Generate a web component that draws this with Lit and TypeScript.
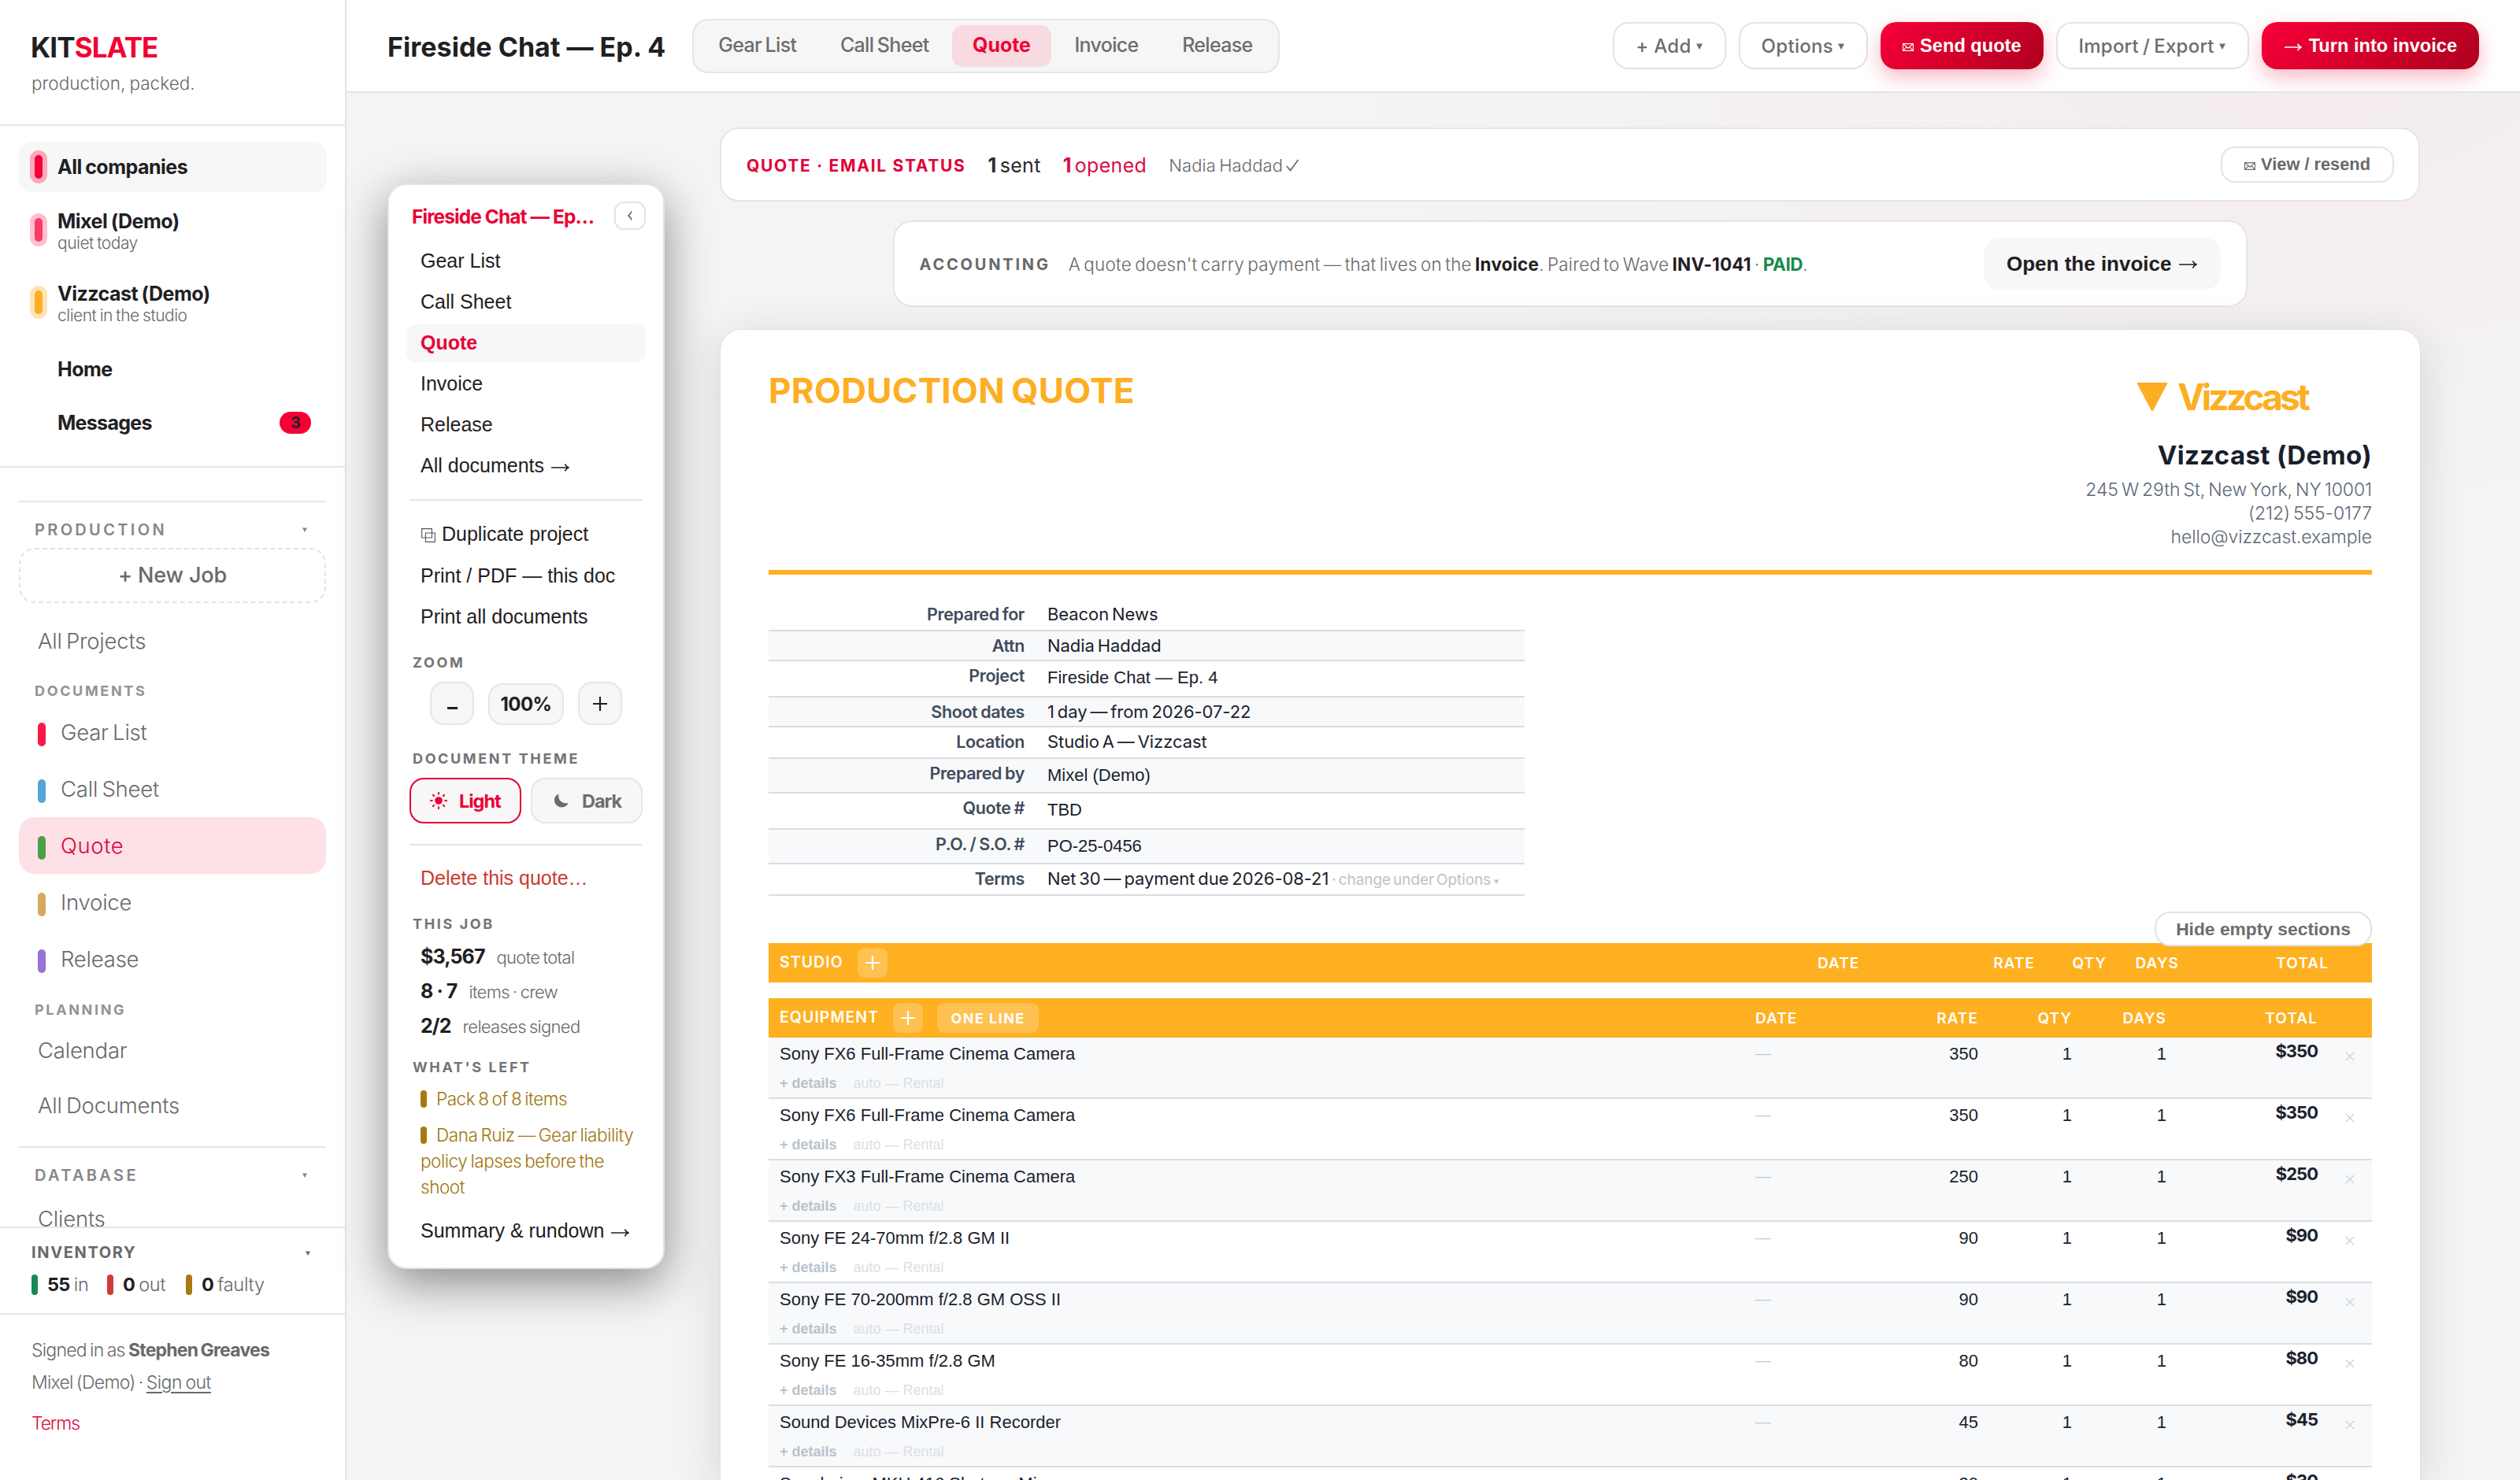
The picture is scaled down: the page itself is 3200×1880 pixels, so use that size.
import { LitElement, html, css, svg } from "lit";
import { customElement } from "lit/decorators.js";
import { classMap } from "lit/directives/class-map.js";

const items = [
  { name: "Sony FX6 Full-Frame Cinema Camera", rate: 350 },
  { name: "Sony FX6 Full-Frame Cinema Camera", rate: 350 },
  { name: "Sony FX3 Full-Frame Cinema Camera", rate: 250 },
  { name: "Sony FE 24-70mm f/2.8 GM II", rate: 90 },
  { name: "Sony FE 70-200mm f/2.8 GM OSS II", rate: 90 },
  { name: "Sony FE 16-35mm f/2.8 GM", rate: 80 },
  { name: "Sound Devices MixPre-6 II Recorder", rate: 45 },
  { name: "Sennheiser MKH 416 Shotgun Mic", rate: 30 },
];

const documents = [
  { label: "Gear List", color: "#fb1846" },
  { label: "Call Sheet", color: "#52a5d8" },
  { label: "Quote", color: "#4aa147" },
  { label: "Invoice", color: "#d6aa5c" },
  { label: "Release", color: "#9673d6" },
];

const info = [
  { label: "Prepared for", value: "Beacon News", height: 40 },
  { label: "Attn", value: "Nadia Haddad", height: 38 },
  { label: "Project", value: "Fireside Chat — Ep. 4", height: 46, input: true },
  { label: "Shoot dates", value: "1 day — from 2026-07-22", height: 38 },
  { label: "Location", value: "Studio A — Vizzcast", height: 40 },
  { label: "Prepared by", value: "Mixel (Demo)", height: 44, input: true },
  { label: "Quote #", value: "TBD", height: 46, input: true },
  { label: "P.O. / S.O. #", value: "PO-25-0456", height: 44, input: true },
  { label: "Terms", value: "Net 30 — payment due 2026-08-21", height: 40, note: "change under Options" },
];

// small glyph icons, all drawn in currentColor
const arrow = html`<svg class="arrow" width="25" height="12" viewBox="0 0 25 12">
  ${svg`<path d="M1 6H23M18.5 1.5C19.5 4 21 5.4 23.5 6C21 6.6 19.5 8 18.5 10.5" fill="none" stroke="currentColor" stroke-width="1.7"/>`}
</svg>`;

const mail = html`<svg class="mail" width="14" height="10" viewBox="0 0 14 10">
  ${svg`<path d="M.6 .6H13.4V9.4H.6ZM.6 .6L7 6.2L13.4 .6M.6 9.4L5.2 4.6M13.4 9.4L8.8 4.6" fill="none" stroke="currentColor" stroke-width="1.1"/>`}
</svg>`;

const caret = html`<svg class="caret" width="8" height="8" viewBox="0 0 8 8">
  ${svg`<path d="M0 .5H8L4 8Z" fill="currentColor"/>`}
</svg>`;

const plus = html`<svg width="18" height="18" viewBox="0 0 18 18">
  ${svg`<path d="M9 0V18M0 9H18" stroke="currentColor" stroke-width="2.2"/>`}
</svg>`;

const sun = html`<svg width="24" height="24" viewBox="0 0 24 24">
  ${svg`<circle cx="12" cy="12" r="4.8" fill="currentColor"/>
  <path d="M12 1V4.6M12 19.4V23M1 12H4.6M19.4 12H23M4.3 4.3L6.7 6.7M17.3 17.3L19.7 19.7M4.3 19.7L6.7 17.3M17.3 6.7L19.7 4.3" stroke="currentColor" stroke-width="2"/>`}
</svg>`;

const moon = html`<svg width="20" height="18" viewBox="0 0 20 18">
  ${svg`<path d="M6.5 .5C2.6 2 1 5 1 8.3C1 13.5 5 17.4 10.2 17.4C14.2 17.4 17.4 15.3 18.6 12C11.5 13.8 4.8 8.6 6.5 .5Z" fill="currentColor"/>`}
</svg>`;

const duplicate = html`<svg class="dup" width="18" height="18" viewBox="0 0 18 18">
  ${svg`<path d="M.6 .6H13.4V12H.6ZM5.4 6H17.4V17.4H5.4Z" fill="none" stroke="currentColor" stroke-width="1.1"/>`}
</svg>`;

@customElement("side-nav")
export class SideNav extends LitElement {
  static styles = css`
    :host {
      display: flex;
      flex-direction: column;
      flex: none;
      box-sizing: border-box;
      width: 440px;
      height: 1880px;
      background: #fff;
      border-right: 2px solid #e4e4e4;
      color: #68696b;
    }
    .brand {
      box-sizing: border-box;
      height: 160px;
      padding: 40px 0 0 39px;
      border-bottom: 2px solid #e6e6e6;
    }
    .logo { font-size: 35px; font-weight: 700; line-height: 40px; letter-spacing: -0.026em; color: #1f2022; }
    .logo span { color: #f20034; }
    .tag { margin-top: 10px; padding-left: 1px; font-size: 22.5px; font-weight: 350; line-height: 32px; letter-spacing: 0.002em; word-spacing: -0.06em; }
    .companies {
      box-sizing: border-box;
      height: 434px;
      padding: 20px 23px 0 24px;
      border-bottom: 2px solid #e6e6e6;
    }
    .company {
      display: flex;
      align-items: center;
      box-sizing: border-box;
      height: 88px;
      margin-bottom: 4px;
      padding: 0 20px 0 14px;
      border-radius: 16px;
      color: #1f2022;
      font-size: 25px;
      font-weight: 650;
      letter-spacing: -0.02em;
      word-spacing: -0.04em;
    }
    .company.short { height: 64px; }
    .company.on { background: #f7f7f7; }
    .company.home { margin-top: 9px; }
    .company.indent { padding-left: 49px; }
    .pill {
      box-sizing: border-box;
      width: 22px;
      height: 42px;
      margin-right: 13px;
      border: 6px solid;
      border-radius: 11px;
    }
    .pill.all { background: #f60036; border-color: #f9a9bb; }
    .pill.mixel { background: #fb3a66; border-color: #fdc0ce; }
    .pill.vizz { background: #fdae22; border-color: #fee4b8; }
    .names { padding-top: 5px; line-height: 27px; }
    .status { font-size: 21px; font-weight: 350; letter-spacing: -0.024em; color: #68696b; }
    .badge {
      width: 40px;
      margin-left: auto;
      border-radius: 14px;
      background: #f40035;
      font-size: 20px;
      line-height: 28px;
      text-align: center;
    }
    .messages { letter-spacing: -0.028em; }
    nav { flex: 1; min-height: 0; overflow: hidden; padding: 42px 24px 0; }
    .group { border-top: 2px solid #e6e6e6; }
    .group + .group { margin-top: 17px; }
    .head {
      display: flex;
      justify-content: space-between;
      align-items: center;
      box-sizing: border-box;
      height: 55px;
      padding: 16px 24px 1px 20px;
      font-size: 20px;
      font-weight: 600;
      letter-spacing: 0.167em;
      color: #858688;
    }
    .caret { width: 6px; height: 6px; }
    .new {
      box-sizing: border-box;
      height: 70px;
      margin: 3px 0 13px;
      border: 2px dashed #e2e2e2;
      border-radius: 20px;
      font-size: 27px;
      font-weight: 550;
      line-height: 65px;
      letter-spacing: -0.004em;
      text-align: center;
    }
    .label {
      box-sizing: border-box;
      height: 45px;
      padding: 11px 0 0 20px;
      font-size: 18px;
      font-weight: 650;
      line-height: 35px;
      letter-spacing: 0.147em;
      color: #929395;
    }
    .link {
      display: flex;
      align-items: center;
      height: 70px;
      padding-left: 24px;
      border-radius: 20px;
      font-size: 27.5px;
      font-weight: 350;
      letter-spacing: -0.008em;
      word-spacing: -0.08em;
    }
    .link.doc { height: 72px; padding-left: 24px; }
    .link.on { background: #fde1e6; color: #e00038; letter-spacing: 0.022em; }
    .dot { width: 10px; height: 30px; margin: 6px 19px 0 0; border-radius: 5px; }
    .inventory { box-sizing: border-box; height: 110px; padding: 16px 43px 0 40px; border-top: 2px solid #e6e6e6; }
    .inv-head {
      display: flex;
      justify-content: space-between;
      align-items: center;
      font-size: 20px;
      font-weight: 700;
      line-height: 31px;
      letter-spacing: 0.082em;
    }
    .inv-head .caret { margin-right: 1px; }
    .stats { display: grid; grid-template-columns: 96px 100px auto; margin-top: 8px; }
    .stat { display: flex; align-items: center; font-size: 23.5px; font-weight: 350; line-height: 34px; letter-spacing: -0.01em; }
    .stat b { margin-right: 5px; color: #1f2022; letter-spacing: -0.03em; }
    .bar { width: 8px; height: 26px; margin-right: 12px; border-radius: 4px; }
    .in { background: #178a52; }
    .out { background: #d03a35; }
    .faulty { background: #a9780f; }
    .account {
      box-sizing: border-box;
      height: 212px;
      padding: 25px 0 0 40px;
      border-top: 2px solid #e6e6e6;
      font-size: 23px;
      font-weight: 350;
      line-height: 41px;
      letter-spacing: -0.034em;
      word-spacing: -0.06em;
    }
    .out-link { text-decoration: underline; text-underline-offset: 4px; letter-spacing: -0.024em; }
    .terms { margin-top: 11px; letter-spacing: -0.05em; color: #dc0b40; }
  `;

  render() {
    return html`
      <div class="brand">
        <div class="logo">KIT<span>SLATE</span></div>
        <div class="tag">production, packed.</div>
      </div>
      <div class="companies">
        <div class="company short on"><span class="pill all"></span>All companies</div>
        <div class="company">
          <span class="pill mixel"></span>
          <div class="names">Mixel (Demo)<div class="status">quiet today</div></div>
        </div>
        <div class="company">
          <span class="pill vizz"></span>
          <div class="names">Vizzcast (Demo)<div class="status">client in the studio</div></div>
        </div>
        <div class="company short home indent">Home</div>
        <div class="company short indent messages">Messages<span class="badge">3</span></div>
      </div>
      <nav>
        <div class="group">
          <div class="head">PRODUCTION${caret}</div>
          <div class="new">+ New Job</div>
          <div class="link">All Projects</div>
          <div class="label">DOCUMENTS</div>
          ${documents.map(d => html`
            <div class=${classMap({ link: true, doc: true, on: d.label === "Quote" })}>
              <span class="dot" style="background:${d.color}"></span>${d.label}
            </div>`)}
          <div class="label">PLANNING</div>
          <div class="link">Calendar</div>
          <div class="link">All Documents</div>
        </div>
        <div class="group">
          <div class="head">DATABASE${caret}</div>
          <div class="link">Clients</div>
        </div>
      </nav>
      <div class="inventory">
        <div class="inv-head">INVENTORY${caret}</div>
        <div class="stats">
          <div class="stat"><span class="bar in"></span><b>55</b>in</div>
          <div class="stat"><span class="bar out"></span><b>0</b>out</div>
          <div class="stat"><span class="bar faulty"></span><b>0</b>faulty</div>
        </div>
      </div>
      <div class="account">
        <div>Signed in as <b>Stephen Greaves</b></div>
        <div>Mixel (Demo) · <span class="out-link">Sign out</span></div>
        <div class="terms">Terms</div>
      </div>
    `;
  }
}

@customElement("top-bar")
export class TopBar extends LitElement {
  static styles = css`
    :host {
      display: flex;
      align-items: center;
      flex: none;
      box-sizing: border-box;
      height: 118px;
      padding: 0 52px 0 52px;
      background: #fff;
      border-bottom: 2px solid #e4e4e4;
      color: #6c6d6f;
      overflow: hidden;
    }
    h1 { flex: none; width: 387px; margin: 3px 0 0; font-size: 34px; font-weight: 700; line-height: 44px; letter-spacing: 0.001em; color: #1f2022; }
    .tabs {
      display: flex;
      gap: 3px;
      box-sizing: border-box;
      height: 69px;
      margin: 1px auto 0 0;
      padding: 6px 6px 6px 5px;
      border: 2px solid #e6e6e6;
      border-radius: 20px;
      background: #f6f6f6;
    }
    .tab {
      padding: 0 26.3px;
      border-radius: 14px;
      font-size: 25px;
      font-weight: 550;
      line-height: 51px;
      letter-spacing: -0.027em;
      word-spacing: -0.06em;
    }
    .tab.on { background: #f8dbe1; color: #ee0035; font-weight: 700; letter-spacing: -0.003em; }
    .btn {
      display: flex;
      align-items: center;
      box-sizing: border-box;
      height: 60px;
      margin-left: 16px;
      padding: 0 28px 0 27px;
      border: 2px solid #e4e4e4;
      border-radius: 20px;
      font-size: 24px;
      font-weight: 450;
      letter-spacing: 0.013em;
      white-space: nowrap;
    }
    .btn svg:first-of-type:not(.caret):not(.arrow):not(.mail) { width: 17px; margin: 2px 7px 0 0; }
    .btn .caret { margin: 2px 0 0 6px; }
    .btn.tight { letter-spacing: 0.009em; word-spacing: -0.06em; }
    .primary {
      padding: 0 28px;
      border: 0;
      background: linear-gradient(135deg, #f90037, #ae001f);
      box-shadow: 0 10px 26px rgba(240, 0, 50, 0.28);
      color: #fff;
      font: 700 23.6px "Liberation Sans", Arial, sans-serif;
      letter-spacing: 0;
    }
    .mail { margin: 4px 8px 0 0; }
    .primary .arrow { margin: 4px 8px 0 0; width: 24px; }
  `;

  render() {
    const tabs = documents.map(d => d.label);
    return html`
      <h1>Fireside Chat — Ep. 4</h1>
      <div class="tabs">
        ${tabs.map(t => html`<div class=${classMap({ tab: true, on: t === "Quote" })}>${t}</div>`)}
      </div>
      <div class="btn">+ Add${caret}</div>
      <div class="btn">Options${caret}</div>
      <div class="btn primary">${mail}Send quote</div>
      <div class="btn tight">Import / Export${caret}</div>
      <div class="btn primary">${arrow}Turn into invoice</div>
    `;
  }
}

@customElement("job-panel")
export class JobPanel extends LitElement {
  static styles = css`
    :host {
      flex: none;
      box-sizing: border-box;
      width: 352px;
      height: 1379px;
      padding: 21px 22px 0;
      border: 2px solid #e5e5e5;
      border-radius: 24px;
      background: #fff;
      box-shadow: 0 18px 60px rgba(0, 0, 0, 0.44);
      color: #1f2022;
    }
    .top { display: flex; justify-content: space-between; align-items: center; height: 36px; margin-bottom: 16px; padding-left: 7px; }
    .title { margin-top: 2px; font-size: 24.5px; font-weight: 700; letter-spacing: -0.038em; color: #ea0034; white-space: nowrap; }
    .collapse {
      display: flex;
      align-items: center;
      justify-content: center;
      box-sizing: border-box;
      width: 40px;
      height: 36px;
      border: 2px solid #e4e4e4;
      border-radius: 12px;
      color: #6c6d6f;
    }
    .item {
      height: 48px;
      margin-bottom: 4px;
      padding-left: 18px;
      border-radius: 12px;
      font: 25px "Liberation Sans", Arial, sans-serif;
      line-height: 46px;
      white-space: nowrap;
    }
    .item.on { background: #f7f7f7; color: #e80037; font-weight: 700; }
    .item .arrow { margin-left: 1px; }
    .item.copy { height: 50px; line-height: 48px; }
    .dup { margin: 0 8px -2px 1px; color: #55575a; }
    .rule { height: 2px; margin: 18px 4px; background: #e4e4e4; }
    .danger { color: #c93a32; }
    .label {
      padding-left: 8px;
      font-size: 18px;
      font-weight: 650;
      line-height: 20px;
      letter-spacing: 0.146em;
      color: #737476;
    }
    .zoom { display: flex; justify-content: center; align-items: flex-end; gap: 18px; height: 55px; margin: 14px 0 33px; }
    .zoom div {
      display: flex;
      align-items: center;
      justify-content: center;
      box-sizing: border-box;
      width: 56px;
      height: 55px;
      border: 2px solid #e6e6e6;
      border-radius: 18px;
      background: #f7f7f7;
      font-size: 24px;
      font-weight: 700;
      letter-spacing: -0.024em;
    }
    .zoom .level { width: 96px; height: 53px; }
    .minus { width: 13px; height: 3.5px; margin-top: 12px; background: #1f2022; }
    .themes { display: flex; gap: 12px; margin: 14px 4px 26px; }
    .theme {
      display: flex;
      align-items: center;
      box-sizing: border-box;
      width: 142px;
      height: 58px;
      padding-left: 23px;
      border: 2px solid #e6e6e6;
      border-radius: 18px;
      background: #f7f7f7;
      font-size: 23.5px;
      font-weight: 700;
      letter-spacing: -0.044em;
      color: #6c6d6f;
    }
    .theme svg { margin-right: 14px; }
    .theme.dark { padding-left: 27px; }
    .theme.dark svg { margin-right: 16px; }
    .theme.on { border-color: #e60037; color: #ea0036; }
    .stats { margin: 10px 0 20px 18px; }
    .stat { display: flex; align-items: baseline; height: 44px; font-size: 22px; font-weight: 350; line-height: 43px; letter-spacing: -0.032em; word-spacing: -0.06em; color: #68696b; }
    .stat b { margin-right: 15px; font-size: 25px; font-weight: 750; color: #1f2022; letter-spacing: -0.036em; word-spacing: 0; }
    .todo { margin: 13px 4px 0 18px; font-size: 22.5px; font-weight: 350; line-height: 33px; letter-spacing: -0.02em; word-spacing: -0.08em; color: #a0740c; }
    .todo + .todo { margin-top: 13px; }
    .todo i { display: inline-block; width: 8px; height: 22px; margin-right: 12px; border-radius: 4px; background: #a9780f; vertical-align: -3px; }
    .gap-a { margin-top: 24px; }
    .gap-b { margin-top: 16px; }
  `;

  render() {
    return html`
      <div class="top">
        <div class="title">Fireside Chat — Ep…</div>
        <div class="collapse">
          <svg width="6" height="12" viewBox="0 0 6 12"><path d="M5 .5C4 3 2.8 4.8 1 6C2.8 7.2 4 9 5 11.5" fill="none" stroke="currentColor" stroke-width="1.7"/></svg>
        </div>
      </div>
      ${documents.map(d => html`<div class=${classMap({ item: true, on: d.label === "Quote" })}>${d.label}</div>`)}
      <div class="item">All documents ${arrow}</div>
      <div class="rule"></div>
      <div class="item copy">${duplicate}Duplicate project</div>
      <div class="item">Print / PDF — this doc</div>
      <div class="item">Print all documents</div>
      <div class="label gap-a">ZOOM</div>
      <div class="zoom">
        <div><span class="minus"></span></div>
        <div class="level">100%</div>
        <div>${plus}</div>
      </div>
      <div class="label">DOCUMENT THEME</div>
      <div class="themes">
        <div class="theme on">${sun}Light</div>
        <div class="theme dark">${moon}Dark</div>
      </div>
      <div class="rule"></div>
      <div class="item danger">Delete this quote…</div>
      <div class="label gap-a">THIS JOB</div>
      <div class="stats">
        <div class="stat"><b>$3,567</b>quote total</div>
        <div class="stat"><b>8 · 7</b>items · crew</div>
        <div class="stat"><b>2/2</b>releases signed</div>
      </div>
      <div class="label">WHAT'S LEFT</div>
      <div class="todo"><i></i>Pack 8 of 8 items</div>
      <div class="todo"><i></i>Dana Ruiz — Gear liability policy lapses before the shoot</div>
      <div class="item gap-b">Summary &amp; rundown ${arrow}</div>
    `;
  }
}

@customElement("quote-sheet")
export class QuoteSheet extends LitElement {
  static styles = css`
    :host {
      display: block;
      flex: 1;
      min-height: 0;
      box-sizing: border-box;
      margin-left: 1px;
      padding: 53px 61px 0 61px;
      border-radius: 26px 26px 0 0;
      background: #fff;
      box-shadow: 0 12px 60px rgba(24, 32, 44, 0.15), 0 0 2px rgba(24, 32, 44, 0.12);
      color: #1b222d;
    }
    header {
      display: flex;
      justify-content: space-between;
      box-sizing: border-box;
      height: 258px;
      border-bottom: 6px solid #ffb020;
    }
    h2 { margin: 0; font-size: 44px; font-weight: 750; line-height: 48px; letter-spacing: 0.007em; word-spacing: -0.06em; color: #fdae22; }
    .from { font-size: 23px; font-weight: 350; line-height: 30px; letter-spacing: -0.004em; word-spacing: -0.1em; text-align: right; color: #5c6877; }
    .logo {
      display: flex;
      justify-content: flex-end;
      align-items: center;
      gap: 12px;
      height: 60px;
      margin: 2px 82px 22px 0;
      font-size: 46px;
      font-weight: 750;
      letter-spacing: -0.083em;
      color: #fdae22;
    }
    .name { margin-bottom: 7px; font-size: 33px; font-weight: 700; line-height: 44px; letter-spacing: 0.011em; word-spacing: 0; color: #18202c; }
    .info { width: 960px; margin-top: 32px; }
    .info-row {
      display: grid;
      grid-template-columns: 325px 1fr;
      column-gap: 29px;
      box-sizing: border-box;
      border-bottom: 2px solid #d9dde1;
      font-size: 22px;
      line-height: 36px;
    }
    .info-row:nth-child(even) { background: #f7f9fb; }
    .key { font-size: 21.5px; font-weight: 600; letter-spacing: -0.018em; word-spacing: -0.05em; text-align: right; color: #414c5b; }
    .value { font-weight: 370; letter-spacing: -0.003em; word-spacing: -0.1em; white-space: nowrap; }
    .value.input { font-family: "Liberation Sans", Arial, sans-serif; font-weight: 400; line-height: 41px; letter-spacing: 0; word-spacing: 0; }
    .note { font-size: 19px; letter-spacing: -0.004em; color: #bdc2c7; }
    .note .caret { margin-left: 4px; width: 6px; }
    .hide {
      position: relative;
      z-index: 1;
      box-sizing: border-box;
      width: 276px;
      height: 44px;
      margin: 20px 0 -4px auto;
      border: 2px solid #e2e2e2;
      border-radius: 20px;
      background: #fff;
      font: 700 22.8px "Liberation Sans", Arial, sans-serif;
      line-height: 41px;
      text-align: center;
      color: #6c6d6f;
    }
    .band, .row {
      display: grid;
      grid-template-columns: 1fr 100px 183px 119px 120px 192px 69px;
      padding-left: 14px;
    }
    .band {
      align-items: center;
      height: 50px;
      background: #ffb020;
      color: #fff;
      font-size: 19px;
      font-weight: 600;
      letter-spacing: 0.055em;
    }
    .band.studio { grid-template-columns: 1fr 101px 175px 91px 92px 190px 55px; margin-bottom: 20px; }
    .section { display: flex; align-items: center; font-size: 19.5px; letter-spacing: 0.054em; }
    .section span { margin: -3px 18px 0 0; }
    .chip {
      display: flex;
      align-items: center;
      justify-content: center;
      height: 38px;
      border-radius: 9px;
      background: rgba(255, 255, 255, 0.22);
      width: 38px;
      margin-right: 18px;
    }
    .chip.wide { width: 129px; font-size: 18px; font-weight: 700; letter-spacing: 0.08em; }
    .num { text-align: right; }
    .row {
      box-sizing: border-box;
      height: 78px;
      border-bottom: 2px solid #d9dfe3;
      font: 22px "Liberation Sans", Arial, sans-serif;
      line-height: 41px;
    }
    .row.odd { background: #f7f9fb; }
    .details { font-size: 18px; line-height: 34px; color: #dcdfe3; }
    .details b { margin-right: 21px; color: #b9c2ca; }
    .dash { font-size: 20px; color: #c5cbd0; }
    .sum { font-family: Inter, sans-serif; font-weight: 700; line-height: 35px; letter-spacing: -0.045em; text-align: right; }
    .del { padding: 2px 0 0 35px; color: #d0d6da; }
  `;

  columns() {
    return html`
      <span>DATE</span><span class="num">RATE</span><span class="num">QTY</span>
      <span class="num">DAYS</span><span class="num">TOTAL</span>
    `;
  }

  render() {
    return html`
      <header>
        <h2>PRODUCTION QUOTE</h2>
        <div class="from">
          <div class="logo">
            <svg width="40" height="37" viewBox="0 0 40 37"><path d="M2 1H38L20 35Z" fill="currentColor" stroke="currentColor" stroke-width="2.5" stroke-linejoin="round"/></svg>
            Vizzcast
          </div>
          <div class="name">Vizzcast (Demo)</div>
          <div>245 W 29th St, New York, NY 10001</div>
          <div>(212) 555-0177</div>
          <div>hello@vizzcast.example</div>
        </div>
      </header>
      <div class="info">
        ${info.map(r => html`
          <div class="info-row" style="height:${r.height}px">
            <div class="key">${r.label}</div>
            <div class=${classMap({ value: true, input: !!r.input })}>${r.value}
              ${r.note ? html`<span class="note">· ${r.note}${caret}</span>` : ""}
            </div>
          </div>`)}
      </div>
      <div class="hide">Hide empty sections</div>
      <div class="band studio">
        <div class="section"><span>STUDIO</span><div class="chip">${plus}</div></div>
        ${this.columns()}
      </div>
      <div class="band">
        <div class="section"><span>EQUIPMENT</span><div class="chip">${plus}</div><div class="chip wide">ONE LINE</div></div>
        ${this.columns()}
      </div>
      ${items.map((it, i) => html`
        <div class=${classMap({ row: true, odd: i % 2 === 0 })}>
          <div>
            ${it.name}
            <div class="details"><b>+ details</b>auto — Rental</div>
          </div>
          <div class="dash">—</div>
          <div class="num">${it.rate}</div>
          <div class="num">1</div>
          <div class="num">1</div>
          <div class="sum">$${it.rate}</div>
          <div class="del">
            <svg width="12" height="12" viewBox="0 0 12 12"><path d="M1 1L11 11M11 1L1 11" stroke="currentColor" stroke-width="1.6"/></svg>
          </div>
        </div>`)}
    `;
  }
}

@customElement("app-root")
export class AppRoot extends LitElement {
  static styles = css`
    :host {
      display: flex;
      width: 3200px;
      height: 1880px;
      overflow: hidden;
      font-family: Inter, sans-serif;
    }
    .page { display: flex; flex-direction: column; flex: 1; min-width: 0; }
    main {
      display: flex;
      flex: 1;
      min-height: 0;
      padding: 0 127px 0 52px;
      background:
        radial-gradient(1250px 560px at 2480px -20px, rgba(240, 0, 70, 0.035), rgba(240, 0, 70, 0) 100%),
        #f4f4f4;
    }
    job-panel { margin: 115px 70px 0 0; }
    .column { display: flex; flex-direction: column; flex: 1; padding-top: 44px; }
    .card {
      display: flex;
      align-items: center;
      flex: none;
      box-sizing: border-box;
      border: 2px solid #e5e5e5;
      border-radius: 24px;
      background: #fff;
      color: #68696b;
    }
    .email { gap: 28px; height: 94px; margin-bottom: 24px; padding: 0 31px 0 32px; }
    .title { margin-top: 2px; font-size: 21px; font-weight: 700; letter-spacing: 0.081em; color: #e00038; }
    .count { margin-top: 2px; font-size: 25px; font-weight: 370; letter-spacing: 0.012em; word-spacing: -0.13em; color: #2a2c2e; }
    .count.opened { color: #dc0b40; }
    .who { margin-top: 1px; font-size: 22px; font-weight: 350; letter-spacing: 0.006em; word-spacing: -0.1em; }
    .resend {
      display: flex;
      align-items: center;
      box-sizing: border-box;
      height: 46px;
      margin-left: auto;
      padding: 0 28px;
      border: 2px solid #e4e4e4;
      border-radius: 18px;
      font: 700 21.8px "Liberation Sans", Arial, sans-serif;
    }
    .mail { margin: 4px 7px 0 0; }
    .accounting { align-self: center; width: 1720px; height: 110px; margin-bottom: 29px; padding: 0 32px 0 32px; }
    .caption { margin: 1px 23px 0 0; font-size: 20px; font-weight: 650; letter-spacing: 0.14em; }
    .text { margin-top: 1px; font-size: 22.5px; font-weight: 350; letter-spacing: 0.008em; word-spacing: -0.1em; }
    .text b { color: #1f2022; letter-spacing: 0.01em; }
    .text .paid { color: #178a4c; letter-spacing: -0.02em; }
    .open {
      display: flex;
      align-items: center;
      height: 66px;
      margin-left: auto;
      padding: 0 29px;
      border-radius: 20px;
      background: #f7f7f7;
      font: 700 26px "Liberation Sans", Arial, sans-serif;
      color: #1f2022;
    }
    .open .arrow { margin: 2px 0 0 8px; }
  `;

  render() {
    return html`
      <side-nav></side-nav>
      <div class="page">
        <top-bar></top-bar>
        <main>
          <job-panel></job-panel>
          <div class="column">
            <div class="card email">
              <span class="title">QUOTE · EMAIL STATUS</span>
              <span class="count"><b>1</b> sent</span>
              <span class="count opened"><b>1</b> opened</span>
              <span class="who">Nadia Haddad
                <svg width="17" height="16" viewBox="0 0 17 16"><path d="M1 9L5.5 14.5L15.5 1" fill="none" stroke="currentColor" stroke-width="1.7"/></svg>
              </span>
              <div class="resend">${mail}View / resend</div>
            </div>
            <div class="card accounting">
              <span class="caption">ACCOUNTING</span>
              <span class="text">A quote doesn't carry payment — that lives on the <b>Invoice</b>. Paired to Wave <b>INV-1041</b> · <b class="paid">PAID</b>.</span>
              <div class="open">Open the invoice${arrow}</div>
            </div>
            <quote-sheet></quote-sheet>
          </div>
        </main>
      </div>
    `;
  }
}
